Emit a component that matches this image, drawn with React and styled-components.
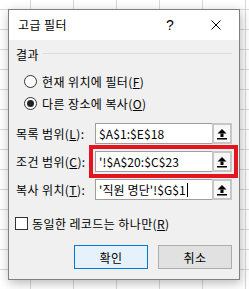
import React from 'react';
import styled, { createGlobalStyle } from 'styled-components';

const GlobalStyle = createGlobalStyle`
  html, body { margin: 0; padding: 0; }
  body { font-family: "Noto Sans CJK KR", "Noto Sans", sans-serif; }
`;

const Screen = styled.div`
  width: 249px;
  height: 289px;
  box-sizing: border-box;
  padding: 9px 0 0 8px;
  overflow: hidden;
  background-color: #fff;
  background-image:
    linear-gradient(to right, #d9d9d9 1px, transparent 1px),
    linear-gradient(to bottom, #d9d9d9 1px, transparent 1px);
  background-size: 43px 20px;
  background-position: 30px 9px;
`;

const Dialog = styled.div`
  width: 232px;
  height: 271px;
  box-sizing: border-box;
  border: 1px solid #7f7f7f;
  background: #f0f0f0;
  box-shadow: 1px 3px 10px rgba(0, 0, 0, 0.28);
  display: flex;
  flex-direction: column;
  font-size: 12px;
  letter-spacing: 0.4px;
  color: #000;
`;

const TitleBar = styled.div`
  height: 30px;
  flex-shrink: 0;
  background: #fff;
  display: flex;
  align-items: center;
`;

const Title = styled.div`
  flex: 1;
  padding-left: 9px;
  font-size: 12px;
  line-height: 16px;
`;

const TitleButton = styled.div`
  width: 46px;
  height: 30px;
  display: flex;
  align-items: center;
  justify-content: center;
  font-size: 14px;
  font-family: "Liberation Sans", sans-serif;
`;

const Body = styled.div`
  flex: 1;
  padding: 7px 7px 10px;
  display: flex;
  flex-direction: column;
`;

const GroupHeader = styled.div`
  height: 16px;
  display: flex;
  align-items: center;
  gap: 4px;
  line-height: 16px;
`;

const GroupLine = styled.div`
  flex: 1;
  height: 1px;
  background: #dcdcdc;
  margin-bottom: 4px;
`;

const RadioList = styled.div`
  margin-top: 7px;
  padding-left: 8px;
  display: flex;
  flex-direction: column;
`;

const RadioRow = styled.div`
  height: 22px;
  display: flex;
  align-items: center;
  gap: 5px;
`;

const RadioCircle = styled.span`
  width: 13px;
  height: 13px;
  box-sizing: border-box;
  border: 1px solid #333;
  border-radius: 50%;
  background: #fff;
  display: flex;
  align-items: center;
  justify-content: center;
  &::after {
    content: '';
    width: 7px;
    height: 7px;
    border-radius: 50%;
    background: ${(p) => (p.$checked ? '#222' : 'transparent')};
  }
`;

const FieldList = styled.div`
  margin-top: 9px;
  display: flex;
  flex-direction: column;
  gap: 7px;
`;

const FieldRow = styled.div`
  height: 21px;
  display: grid;
  grid-template-columns: 79px 1fr;
  align-items: center;
`;

const FieldLabel = styled.span`
  line-height: 16px;
  white-space: nowrap;
`;

const FieldBox = styled.div`
  height: 21px;
  display: flex;
  outline: ${(p) => (p.$highlight ? '4px solid #e3161f' : 'none')};
  outline-offset: 2px;
`;

const TextBox = styled.div`
  flex: 1;
  box-sizing: border-box;
  border: 1px solid #9d9d9d;
  border-right: none;
  background: #fff;
  padding-left: 3px;
  display: flex;
  align-items: center;
  white-space: nowrap;
  overflow: hidden;
  font-size: 12px;
  letter-spacing: 0.1px;
`;

const Caret = styled.span`
  display: inline-block;
  width: 1px;
  height: 14px;
  background: #000;
  margin-left: 1px;
`;

const PickButton = styled.div`
  width: 20px;
  box-sizing: border-box;
  border: 2px solid #c6c6c6;
  background: #f8f8f8;
  display: flex;
  align-items: center;
  justify-content: center;
`;

const CheckRow = styled.div`
  margin-top: 15px;
  height: 16px;
  display: flex;
  align-items: center;
  gap: 4px;
`;

const CheckBox = styled.span`
  width: 13px;
  height: 13px;
  box-sizing: border-box;
  border: 1px solid #333;
  background: #fff;
  margin-left: -1px;
`;

const ButtonRow = styled.div`
  margin-top: 14px;
  display: flex;
  justify-content: flex-end;
  gap: 10px;
`;

const DialogButton = styled.div`
  width: 74px;
  height: 24px;
  box-sizing: border-box;
  border: 1px solid ${(p) => (p.$primary ? '#0078d7' : '#adadad')};
  background: ${(p) => (p.$primary ? '#e5f1fb' : '#e1e1e1')};
  display: flex;
  align-items: center;
  justify-content: center;
  font-size: 12px;
`;

const UpArrow = () => (
  <svg width="12" height="12" viewBox="0 0 12 12">
    <polygon points="1.5,5.5 6,1 10.5,5.5" fill="#000" />
    <rect x="4.5" y="5.5" width="3" height="3.5" fill="#000" />
    <rect x="1" y="10" width="10" height="1.5" fill="#000" />
  </svg>
);

const CloseIcon = () => (
  <svg width="10" height="10" viewBox="0 0 10 10">
    <path d="M0.5 0.5 L9.5 9.5 M9.5 0.5 L0.5 9.5" stroke="#000" strokeWidth="1" />
  </svg>
);

const fields = [
  { label: '목록 범위', key: 'L', value: '$A$1:$E$18' },
  { label: '조건 범위', key: 'C', value: "'!$A$20:$C$23", highlight: true },
  { label: '복사 위치', key: 'T', value: "'직원 명단'!$G$1", caret: true },
];

export default function App() {
  return (
    <>
      <GlobalStyle />
      <Screen>
        <Dialog>
          <TitleBar>
            <Title>고급 필터</Title>
            <TitleButton>?</TitleButton>
            <TitleButton>
              <CloseIcon />
            </TitleButton>
          </TitleBar>
          <Body>
            <GroupHeader>
              <span>결과</span>
              <GroupLine />
            </GroupHeader>
            <RadioList>
              <RadioRow>
                <RadioCircle />
                <span>
                  현재 위치에 필터(<u>F</u>)
                </span>
              </RadioRow>
              <RadioRow>
                <RadioCircle $checked />
                <span>
                  다른 장소에 복사(<u>O</u>)
                </span>
              </RadioRow>
            </RadioList>
            <FieldList>
              {fields.map((f) => (
                <FieldRow key={f.key}>
                  <FieldLabel>
                    {f.label}(<u>{f.key}</u>):
                  </FieldLabel>
                  <FieldBox $highlight={f.highlight}>
                    <TextBox>
                      {f.value}
                      {f.caret && <Caret />}
                    </TextBox>
                    <PickButton>
                      <UpArrow />
                    </PickButton>
                  </FieldBox>
                </FieldRow>
              ))}
            </FieldList>
            <CheckRow>
              <CheckBox />
              <span>
                동일한 레코드는 하나만(<u>R</u>)
              </span>
            </CheckRow>
            <ButtonRow>
              <DialogButton $primary>확인</DialogButton>
              <DialogButton>취소</DialogButton>
            </ButtonRow>
          </Body>
        </Dialog>
      </Screen>
    </>
  );
}
